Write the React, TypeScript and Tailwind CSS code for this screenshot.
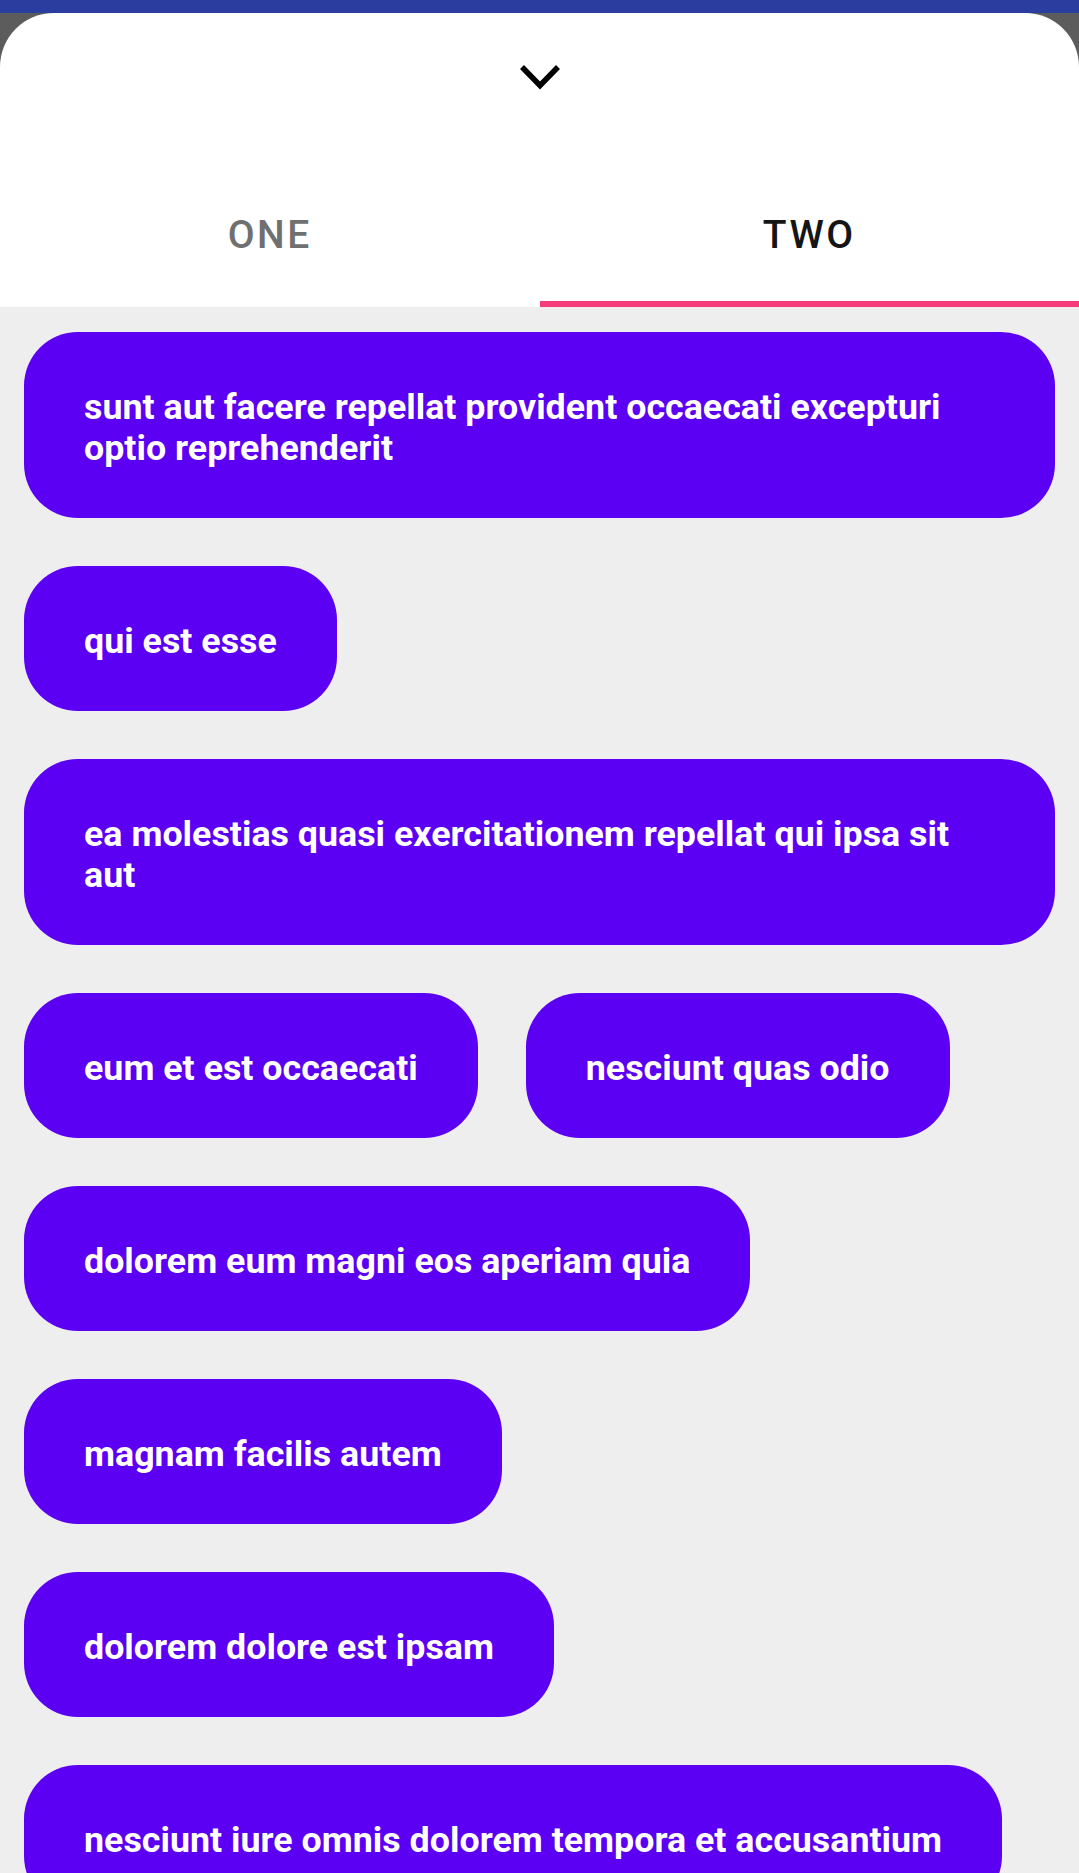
const rows: string[][] = [
  ["sunt aut facere repellat provident occaecati excepturi optio reprehenderit"],
  ["qui est esse"],
  ["ea molestias quasi exercitationem repellat qui ipsa sit aut"],
  ["eum et est occaecati", "nesciunt quas odio"],
  ["dolorem eum magni eos aperiam quia"],
  ["magnam facilis autem"],
  ["dolorem dolore est ipsam"],
  ["nesciunt iure omnis dolorem tempora et accusantium"],
];

function Chip({ title }: { title: string }) {
  return (
    <div className="max-w-full rounded-[54px] bg-[#5c00f4] px-[60px] pt-[55px] pb-[49px] text-[35.8px] leading-[41px] font-bold text-white">
      {title}
    </div>
  );
}

export default function App() {
  return (
    <div className="min-h-[1873px] w-full bg-[#5c5c5c] font-['Roboto',sans-serif]">
      {/* status bar */}
      <div className="h-[13px] bg-[#2b3d9e]" />

      {/* bottom sheet */}
      <div className="overflow-hidden rounded-t-[54px] bg-white">
        {/* handle */}
        <div className="flex h-[150px] justify-center pt-[51px]">
          <svg width="42" height="27" viewBox="0 0 42 27">
            <polyline
              points="3,3 21,21.5 39,3"
              fill="none"
              stroke="#000"
              strokeWidth="5.5"
            />
          </svg>
        </div>

        {/* tabs */}
        <div className="grid h-[144px] grid-cols-2">
          <div className="flex items-center justify-center text-[39px] font-medium tracking-[2.5px] text-[#707070]">
            ONE
          </div>
          <div className="relative flex items-center justify-center text-[39px] font-medium tracking-[2.5px] text-[#151515]">
            TWO
            <div className="absolute bottom-0 left-0 h-[6px] w-full bg-[#f53b7c]" />
          </div>
        </div>

        {/* list */}
        <div className="flex min-h-[1566px] flex-col gap-[48px] bg-[#eeeeee] px-[24px] pt-[25px] pb-[40px]">
          {rows.map((row, i) => (
            <div key={i} className="flex gap-[48px]">
              {row.map((t) => (
                <Chip key={t} title={t} />
              ))}
            </div>
          ))}
        </div>
      </div>
    </div>
  );
}
